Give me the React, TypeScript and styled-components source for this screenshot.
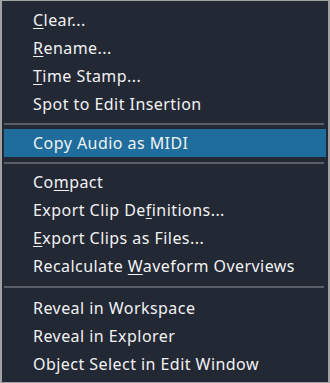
import React from 'react'
import styled, { createGlobalStyle } from 'styled-components'

const GlobalStyle = createGlobalStyle`
  html, body {
    margin: 0;
    padding: 0;
    background: #232835;
  }
`

const Menu = styled.ul`
  box-sizing: border-box;
  width: 330px;
  height: 383px;
  margin: 0;
  padding: 5px 2px 6px 2px;
  list-style: none;
  background: #232835;
  border: 1px solid #a3a3a3;
  border-left-width: 2px;
  border-right-width: 2px;
  font-family: 'Noto Sans', 'Open Sans', sans-serif;
  font-size: 16px;
  letter-spacing: 0.45px;
  color: #f2f2f2;
`

const Item = styled.li<{ $active?: boolean }>`
  height: 28px;
  display: flex;
  align-items: center;
  padding-left: 29px;
  background: ${(p) => (p.$active ? '#1e6d9c' : 'transparent')};
  white-space: nowrap;
`

const Separator = styled.li<{ $tall?: boolean }>`
  height: ${(p) => (p.$tall ? '14px' : '11px')};
  display: flex;
  align-items: center;
  &::before {
    content: '';
    flex: 1;
    height: 2px;
    margin-right: 2px;
    background: #5b5e66;
  }
`

const Key = styled.u`
  text-decoration-thickness: 1px;
  text-underline-offset: 2px;
`

const App = () => (
  <>
    <GlobalStyle />
    <Menu>
      <Item><span><Key>C</Key>lear...</span></Item>
      <Item><span><Key>R</Key>ename...</span></Item>
      <Item><span><Key>T</Key>ime Stamp...</span></Item>
      <Item><span>Spot to Edit Insertion</span></Item>
      <Separator />
      <Item $active><span>Copy Audio as MIDI</span></Item>
      <Separator />
      <Item><span>Co<Key>m</Key>pact</span></Item>
      <Item><span>Export Clip De<Key>f</Key>initions...</span></Item>
      <Item><span><Key>E</Key>xport Clips as Files...</span></Item>
      <Item><span>Recalculate <Key>W</Key>aveform Overviews</span></Item>
      <Separator $tall />
      <Item><span>Reveal in Workspace</span></Item>
      <Item><span>Reveal in Explorer</span></Item>
      <Item><span>Object Select in Edit Window</span></Item>
    </Menu>
  </>
)

export default App
